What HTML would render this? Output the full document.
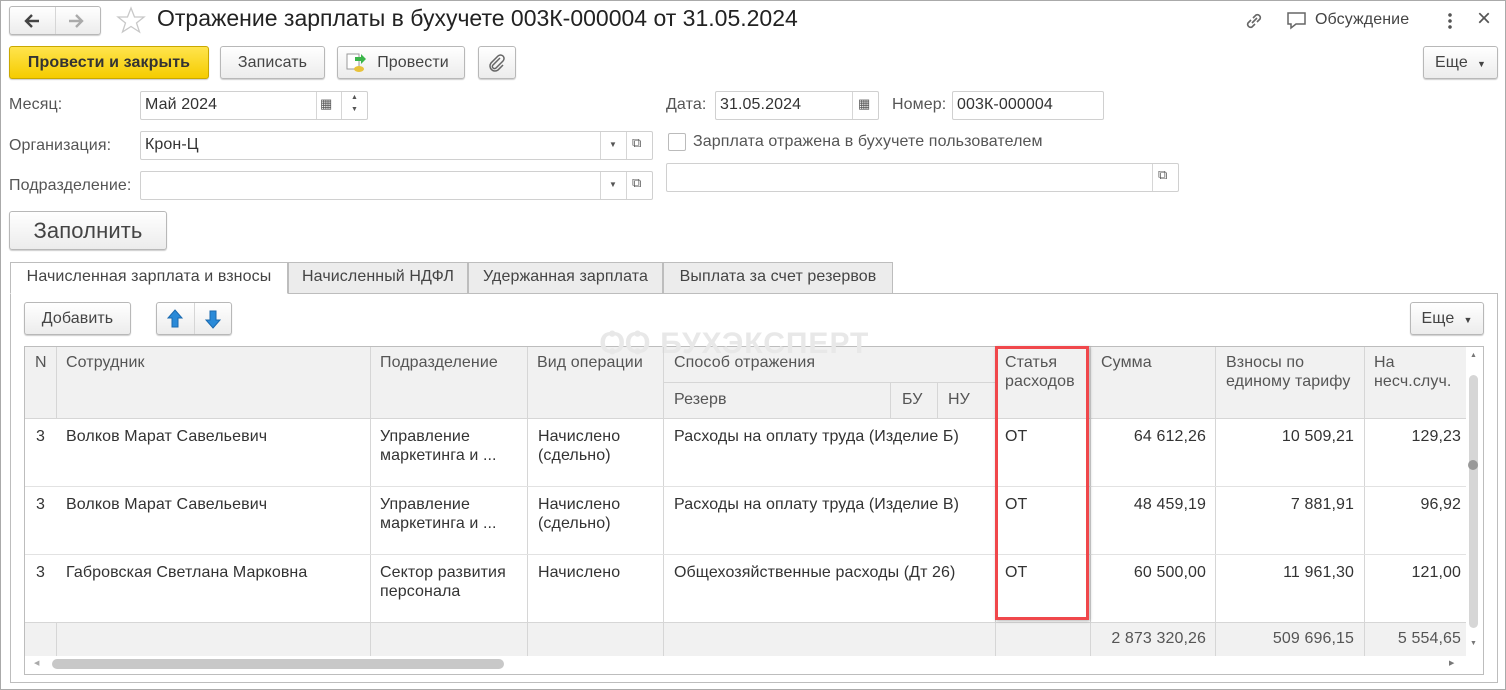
<!DOCTYPE html>
<html><head><meta charset="utf-8"><style>
*{box-sizing:border-box;margin:0;padding:0}
body{width:1506px;height:690px;background:#fff;font-family:"Liberation Sans",Arial,sans-serif;font-size:16px;letter-spacing:0.1px;color:#333;position:relative;overflow:hidden}
.a{position:absolute}
.btn{position:absolute;border:1px solid #b8b8b8;border-radius:3px;background:linear-gradient(#fff,#ececec);box-shadow:0 1px 1px rgba(0,0,0,.2);text-align:center;color:#444}
.inp{position:absolute;border:1px solid #d0d0d0;border-radius:2px;background:#fff;padding-left:4px;line-height:26px;color:#333}
.lbl{position:absolute;color:#555}
.sep{position:absolute;border-left:1px solid #d6d6d6}
.tab{position:absolute;top:262px;height:32px;border:1px solid #bdbdbd;background:#ececec;line-height:28px;text-align:center;color:#444}
.hd{position:absolute;color:#555;padding:6px 10px;line-height:19px}
.cell{position:absolute;padding:8px 10px;line-height:19px;color:#333}
.r{text-align:right}
</style></head><body>
<div class="a" style="left:0;top:0;width:1506px;height:690px;border:1px solid #aaa"></div>
<div class="btn" style="left:9px;top:6px;width:92px;height:29px"></div>
<div class="sep" style="left:55px;top:7px;height:27px"></div>
<svg class="a" style="left:22px;top:11px" width="20" height="20"><path d="M17 10H4M10 4l-6 6 6 6" fill="none" stroke="#444" stroke-width="2.4"/></svg>
<svg class="a" style="left:66px;top:11px" width="20" height="20"><path d="M3 10h13M10 4l6 6-6 6" fill="none" stroke="#aaa" stroke-width="2.4"/></svg>
<svg class="a" style="left:116px;top:6px" width="30" height="28"><polygon points="15,2 18.5,11 28,11 20.5,17 23.5,26 15,20.5 6.5,26 9.5,17 2,11 11.5,11" fill="none" stroke="#c8c8c8" stroke-width="1.3"/></svg>
<div class="a" style="left:157px;top:5px;font-size:23px;color:#222;letter-spacing:0">Отражение зарплаты в бухучете 003К-000004 от 31.05.2024</div>
<svg class="a" style="left:1243px;top:10px" width="22" height="22"><g fill="none" stroke="#666" stroke-width="1.6"><path d="M9 13l5-5"/><path d="M8 10l-3 3a3 3 0 004 4l3-3"/><path d="M14 12l3-3a3 3 0 00-4-4l-3 3"/></g></svg>
<svg class="a" style="left:1285px;top:10px" width="24" height="22"><path d="M3 3h17v11h-9l-5 4v-4H3z" fill="none" stroke="#666" stroke-width="1.5"/></svg>
<div class="a" style="left:1315px;top:11px;color:#444">Обсуждение</div>
<div class="a" style="left:1448px;top:12px;width:4px;height:18px;background:radial-gradient(circle,#555 1.6px,transparent 2px) 0 0/4px 6px"></div>
<div class="a" style="left:1477px;top:5px;font-size:24px;color:#555">×</div>
<div class="btn" style="left:9px;top:46px;width:200px;height:33px;background:linear-gradient(#ffe44d,#f5cc00);border-color:#c9a800;font-weight:bold;color:#333;line-height:31px">Провести и закрыть</div>
<div class="btn" style="left:220px;top:46px;width:105px;height:33px;line-height:31px">Записать</div>
<div class="btn" style="left:337px;top:46px;width:128px;height:33px;line-height:31px;padding-left:24px">Провести</div>
<svg class="a" style="left:345px;top:52px" width="22" height="22"><rect x="2" y="2" width="12" height="15" fill="#fff" stroke="#999"/><path d="M10 5h6v-3l5 5-5 5v-3h-6z" fill="#3bb54a"/><ellipse cx="14" cy="17" rx="5" ry="3" fill="#e8c23a"/></svg>
<div class="btn" style="left:478px;top:46px;width:38px;height:33px"></div>
<svg class="a" style="left:487px;top:53px" width="20" height="20"><path d="M13 5l-7 7a2 2 0 003 3l7-7a3.5 3.5 0 00-5-5l-7 7a5 5 0 007 7l5-5" fill="none" stroke="#666" stroke-width="1.5"/></svg>
<div class="btn" style="left:1423px;top:46px;width:75px;height:33px;line-height:31px">Еще &nbsp;<span style="font-size:9px">▼</span></div>
<div class="lbl" style="left:9px;top:96px">Месяц:</div>
<div class="inp" style="left:140px;top:91px;width:228px;height:29px">Май 2024</div>
<div class="sep" style="left:316px;top:92px;height:27px"></div><div class="sep" style="left:341px;top:92px;height:27px"></div>
<div class="a" style="left:320px;top:96px;font-size:13px;color:#555">▦</div>
<div class="a" style="left:351px;top:92px;font-size:7px;color:#555;line-height:12px">▲<br>▼</div>
<div class="lbl" style="left:666px;top:96px">Дата:</div>
<div class="inp" style="left:715px;top:91px;width:164px;height:29px">31.05.2024</div>
<div class="sep" style="left:852px;top:92px;height:27px"></div>
<div class="a" style="left:858px;top:96px;font-size:13px;color:#555">▦</div>
<div class="lbl" style="left:892px;top:96px">Номер:</div>
<div class="inp" style="left:952px;top:91px;width:152px;height:29px">003К-000004</div>
<div class="lbl" style="left:9px;top:137px">Организация:</div>
<div class="inp" style="left:140px;top:131px;width:513px;height:29px">Крон-Ц</div>
<div class="sep" style="left:600px;top:132px;height:27px"></div><div class="sep" style="left:626px;top:132px;height:27px"></div>
<div class="a" style="left:609px;top:140px;font-size:8px;color:#555">▼</div>
<div class="a" style="left:632px;top:135px;font-size:13px;color:#555">⧉</div>
<div class="a" style="left:668px;top:133px;width:18px;height:18px;border:1px solid #bbb;border-radius:2px"></div>
<div class="lbl" style="left:693px;top:133px">Зарплата отражена в бухучете пользователем</div>
<div class="lbl" style="left:9px;top:177px">Подразделение:</div>
<div class="inp" style="left:140px;top:171px;width:513px;height:29px"></div>
<div class="sep" style="left:600px;top:172px;height:27px"></div><div class="sep" style="left:626px;top:172px;height:27px"></div>
<div class="a" style="left:609px;top:180px;font-size:8px;color:#555">▼</div>
<div class="a" style="left:632px;top:175px;font-size:13px;color:#555">⧉</div>
<div class="inp" style="left:666px;top:163px;width:513px;height:29px"></div>
<div class="sep" style="left:1152px;top:164px;height:27px"></div>
<div class="a" style="left:1158px;top:167px;font-size:13px;color:#555">⧉</div>
<div class="btn" style="left:9px;top:211px;width:158px;height:39px;font-size:22px;line-height:37px">Заполнить</div>
<div class="a" style="left:10px;top:293px;width:1488px;height:390px;border:1px solid #bdbdbd"></div>
<div class="tab" style="left:10px;width:278px;background:#fff;border-bottom-color:#fff">Начисленная зарплата и взносы</div>
<div class="tab" style="left:288px;width:180px">Начисленный НДФЛ</div>
<div class="tab" style="left:468px;width:195px">Удержанная зарплата</div>
<div class="tab" style="left:663px;width:230px">Выплата за счет резервов</div>
<div class="btn" style="left:24px;top:302px;width:107px;height:33px;line-height:31px">Добавить</div>
<div class="btn" style="left:156px;top:302px;width:76px;height:33px"></div>
<div class="sep" style="left:194px;top:303px;height:31px"></div>
<svg class="a" style="left:165px;top:308px" width="20" height="22"><path d="M10 2l7 8h-4v9H7v-9H3z" fill="#2a8ad8" stroke="#1a6ab0"/></svg>
<svg class="a" style="left:203px;top:308px" width="20" height="22"><path d="M10 20l7-8h-4V3H7v9H3z" fill="#2a8ad8" stroke="#1a6ab0"/></svg>
<div class="btn" style="left:1410px;top:302px;width:74px;height:33px;line-height:31px">Еще &nbsp;<span style="font-size:9px">▼</span></div>
<div class="a" style="left:24px;top:346px;width:1460px;height:329px;border:1px solid #bdbdbd;background:#fff"></div>
<div class="a" style="left:25px;top:347px;width:1441px;height:71px;background:#f1f1f1"></div>
<div class="a" style="left:25px;top:622px;width:1441px;height:34px;background:#f1f1f1"></div>
<div class="a" style="left:600px;top:327px;font-size:30px;font-weight:bold;color:#e8e8e8;letter-spacing:1px">ѺѺ БУХЭКСПЕРТ</div>
<div class="sep" style="left:56px;top:347px;height:71px"></div>
<div class="sep" style="left:370px;top:347px;height:309px"></div>
<div class="sep" style="left:527px;top:347px;height:309px"></div>
<div class="sep" style="left:663px;top:347px;height:309px"></div>
<div class="sep" style="left:890px;top:382px;height:36px"></div>
<div class="sep" style="left:937px;top:382px;height:36px"></div>
<div class="sep" style="left:995px;top:347px;height:309px"></div>
<div class="sep" style="left:1090px;top:347px;height:309px"></div>
<div class="sep" style="left:1215px;top:347px;height:309px"></div>
<div class="sep" style="left:1364px;top:347px;height:309px"></div>
<div class="sep" style="left:56px;top:622px;height:34px"></div>
<div class="a" style="left:664px;top:382px;width:331px;border-top:1px solid #d6d6d6"></div>
<div class="a" style="left:25px;top:418px;width:1441px;border-top:1px solid #d6d6d6"></div>
<div class="a" style="left:25px;top:486px;width:1441px;border-top:1px solid #e2e2e2"></div>
<div class="a" style="left:25px;top:554px;width:1441px;border-top:1px solid #e2e2e2"></div>
<div class="a" style="left:25px;top:622px;width:1441px;border-top:1px solid #d6d6d6"></div>
<div class="hd" style="left:25px;top:347px">N</div>
<div class="hd" style="left:56px;top:347px">Сотрудник</div>
<div class="hd" style="left:370px;top:347px">Подразделение</div>
<div class="hd" style="left:527px;top:347px">Вид операции</div>
<div class="hd" style="left:664px;top:347px">Способ отражения</div>
<div class="hd" style="left:664px;top:383px;padding-top:7px">Резерв</div>
<div class="hd" style="left:892px;top:383px;padding-top:7px">БУ</div>
<div class="hd" style="left:938px;top:383px;padding-top:7px">НУ</div>
<div class="hd" style="left:995px;top:347px">Статья<br>расходов</div>
<div class="hd" style="left:1091px;top:347px">Сумма</div>
<div class="hd" style="left:1216px;top:347px">Взносы по<br>единому тарифу</div>
<div class="hd" style="left:1364px;top:347px">На<br>несч.случ.</div>
<div class="cell" style="left:26px;top:419px">3</div>
<div class="cell" style="left:56px;top:419px">Волков Марат Савельевич</div>
<div class="cell" style="left:370px;top:419px">Управление<br>маркетинга и ...</div>
<div class="cell" style="left:528px;top:419px">Начислено<br>(сдельно)</div>
<div class="cell" style="left:664px;top:419px">Расходы на оплату труда (Изделие Б)</div>
<div class="cell" style="left:995px;top:419px">ОТ</div>
<div class="cell r" style="left:1091px;top:419px;width:125px">64 612,26</div>
<div class="cell r" style="left:1216px;top:419px;width:148px">10 509,21</div>
<div class="cell r" style="left:1364px;top:419px;width:107px">129,23</div>
<div class="cell" style="left:26px;top:487px">3</div>
<div class="cell" style="left:56px;top:487px">Волков Марат Савельевич</div>
<div class="cell" style="left:370px;top:487px">Управление<br>маркетинга и ...</div>
<div class="cell" style="left:528px;top:487px">Начислено<br>(сдельно)</div>
<div class="cell" style="left:664px;top:487px">Расходы на оплату труда (Изделие В)</div>
<div class="cell" style="left:995px;top:487px">ОТ</div>
<div class="cell r" style="left:1091px;top:487px;width:125px">48 459,19</div>
<div class="cell r" style="left:1216px;top:487px;width:148px">7 881,91</div>
<div class="cell r" style="left:1364px;top:487px;width:107px">96,92</div>
<div class="cell" style="left:26px;top:555px">3</div>
<div class="cell" style="left:56px;top:555px">Габровская Светлана Марковна</div>
<div class="cell" style="left:370px;top:555px">Сектор развития<br>персонала</div>
<div class="cell" style="left:528px;top:555px">Начислено</div>
<div class="cell" style="left:664px;top:555px">Общехозяйственные расходы (Дт 26)</div>
<div class="cell" style="left:995px;top:555px">ОТ</div>
<div class="cell r" style="left:1091px;top:555px;width:125px">60 500,00</div>
<div class="cell r" style="left:1216px;top:555px;width:148px">11 961,30</div>
<div class="cell r" style="left:1364px;top:555px;width:107px">121,00</div>
<div class="cell r" style="left:1091px;top:621px;width:125px;color:#555">2 873 320,26</div>
<div class="cell r" style="left:1216px;top:621px;width:148px;color:#555">509 696,15</div>
<div class="cell r" style="left:1364px;top:621px;width:107px;color:#555">5 554,65</div>
<div class="a" style="left:995px;top:346px;width:94px;height:274px;border:3px solid #f0474b;box-shadow:1px 1px 3px rgba(0,0,0,.3)"></div>
<div class="a" style="left:1469px;top:375px;width:9px;height:253px;background:#d6d6d6;border-radius:5px"></div>
<div class="a" style="left:1468px;top:460px;width:10px;height:10px;background:#999;border-radius:5px"></div>
<div class="a" style="left:1470px;top:352px;font-size:7px;color:#777">▲</div>
<div class="a" style="left:1470px;top:640px;font-size:7px;color:#777">▼</div>
<div class="a" style="left:52px;top:659px;width:452px;height:10px;background:#c8c8c8;border-radius:5px"></div>
<div class="a" style="left:34px;top:659px;font-size:7px;color:#aaa">◀</div>
<div class="a" style="left:1449px;top:659px;font-size:7px;color:#777">▶</div>
</body></html>
